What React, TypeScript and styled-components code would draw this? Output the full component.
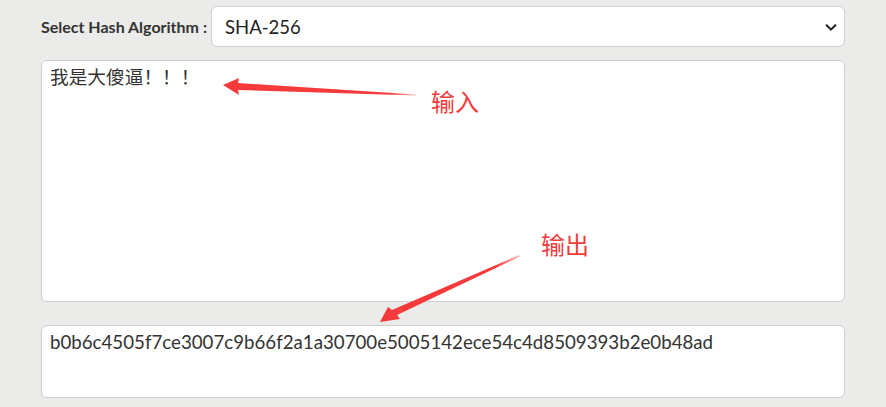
import React from "react";
import styled, { createGlobalStyle } from "styled-components";

const Global = createGlobalStyle`
  html, body { margin: 0; padding: 0; background: #ebebe9; }
  body { font-family: Lato, "Noto Sans CJK SC", sans-serif; }
`;

const Page = styled.div`
  position: relative;
  width: 886px;
  height: 407px;
  overflow: hidden;
  background: #ebebe9;
  padding: 6px 0 0 41px;
  box-sizing: border-box;
  display: flex;
  flex-direction: column;
`;

const Row = styled.div`
  display: flex;
  align-items: center;
  width: 804px;
  gap: 4px;
`;

const Label = styled.label`
  font-family: Lato, sans-serif;
  font-weight: 700;
  font-size: 16px;
  color: #333;
  white-space: nowrap;
`;

const SelectBox = styled.div`
  flex: 1;
  height: 41px;
  box-sizing: border-box;
  background: #fff;
  border: 1px solid #cfcfcf;
  border-radius: 6px;
  display: flex;
  align-items: center;
  justify-content: space-between;
  padding: 0 6px 0 13px;
  font-family: Lato, sans-serif;
  font-size: 18.5px;
  color: #222;
`;

const Area = styled.div<{ $h: number; $mt: number }>`
  width: 804px;
  height: ${(p) => p.$h}px;
  margin-top: ${(p) => p.$mt}px;
  box-sizing: border-box;
  background: #fff;
  border: 1px solid #cfcfcf;
  border-radius: 6px;
  padding: 4px 8px;
  font-family: Lato, "Noto Sans CJK SC", sans-serif;
  font-size: 18.7px;
  line-height: 24px;
  color: #333;
`;

const Note = styled.span<{ $x: number; $y: number }>`
  position: absolute;
  left: ${(p) => p.$x}px;
  top: ${(p) => p.$y}px;
  font-family: "Noto Sans CJK SC", sans-serif;
  font-size: 24px;
  color: #f23c3c;
  line-height: 1;
`;

const Overlay = styled.svg`
  position: absolute;
  left: 0;
  top: 0;
  pointer-events: none;
`;

export default function App() {
  return (
    <>
      <Global />
      <Page>
        <Row>
          <Label>Select Hash Algorithm :</Label>
          <SelectBox>
            <span>SHA-256</span>
            <svg width="14" height="14" viewBox="0 0 16 16">
              <path d="M3 6l5 5 5-5" fill="none" stroke="#222" strokeWidth="2.4" strokeLinecap="round" strokeLinejoin="round" />
            </svg>
          </SelectBox>
        </Row>
        <Area $h={242} $mt={13}>我是大傻逼！！！</Area>
        <Area $h={73} $mt={23}>b0b6c4505f7ce3007c9b66f2a1a30700e5005142ece54c4d8509393b2e0b48ad</Area>
        <Overlay width="886" height="407">
          <defs>
            <linearGradient id="g1" x1="239" y1="0" x2="416" y2="0" gradientUnits="userSpaceOnUse">
              <stop offset="0.85" stopColor="#f43a3a" />
              <stop offset="1" stopColor="#f43a3a" stopOpacity="0.3" />
            </linearGradient>
            <linearGradient id="g2" x1="400" y1="312" x2="520" y2="255" gradientUnits="userSpaceOnUse">
              <stop offset="0.8" stopColor="#f43a3a" />
              <stop offset="1" stopColor="#f43a3a" stopOpacity="0.3" />
            </linearGradient>
          </defs>
          <path d="M223 85 L239 78 L238 83 L416 94.5 L416 95.5 L238 90 L239 95 Z" fill="url(#g1)" />
          <path d="M380 322 L388 307 L392 310 L519 255 L520 256.5 L397 315 L400 319 Z" fill="url(#g2)" />
        </Overlay>
        <Note $x={431} $y={89}>输入</Note>
        <Note $x={541} $y={232}>输出</Note>
      </Page>
    </>
  );
}
